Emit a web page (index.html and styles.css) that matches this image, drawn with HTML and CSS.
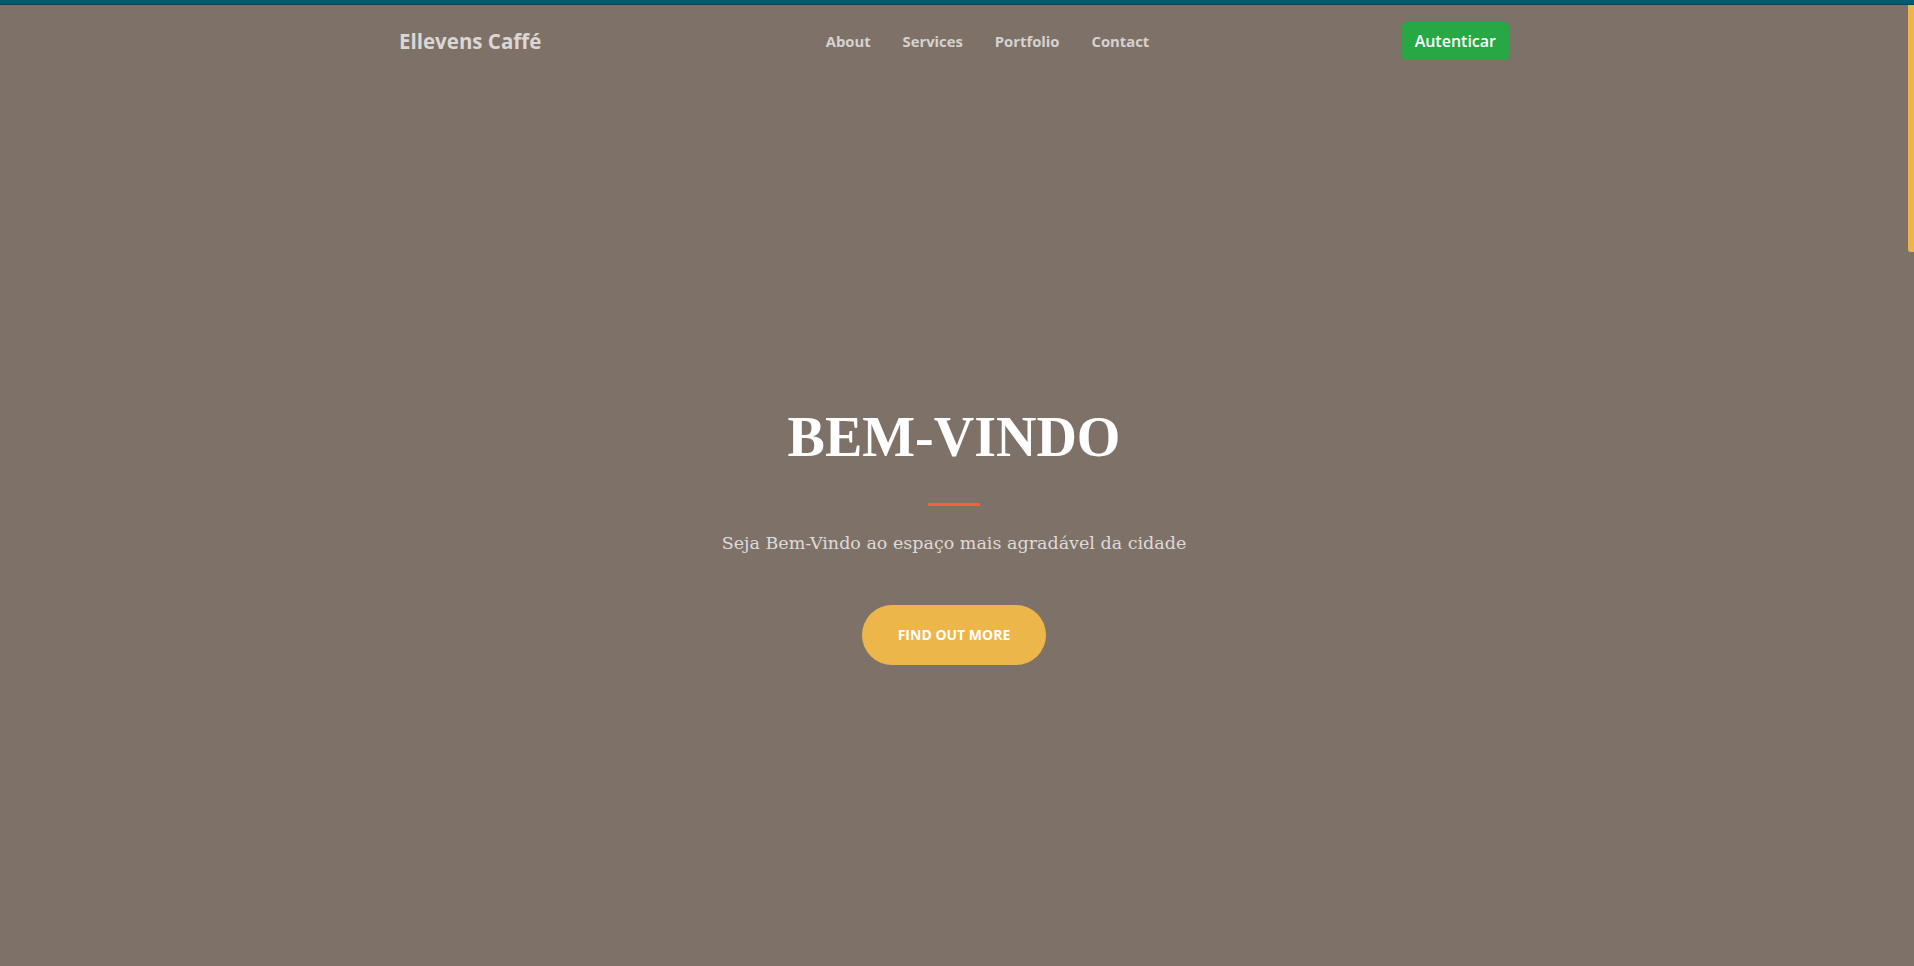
FILE: index.html
```html
<!DOCTYPE html>
<html lang="pt-BR">
<head>
<meta charset="utf-8">
<title>Ellevens Caffé</title>
<link rel="stylesheet" href="styles.css">
</head>
<body>
<div class="top-strip"></div>
<div class="window">
  <header class="masthead">
    <nav class="navbar">
      <div class="container nav-inner">
        <a class="brand" href="#page-top">Ellevens Caffé</a>
        <ul class="nav-links">
          <li><a href="#about">About</a></li>
          <li><a href="#services">Services</a></li>
          <li><a href="#portfolio">Portfolio</a></li>
          <li><a href="#contact">Contact</a></li>
        </ul>
        <a class="btn-auth" href="#login">Autenticar</a>
      </div>
    </nav>
    <div class="hero-body">
      <h1 class="hero-title">BEM-VINDO</h1>
      <hr class="divider">
      <p class="hero-text">Seja Bem-Vindo ao espaço mais agradável da cidade</p>
      <a class="btn-xl" href="#about">Find Out More</a>
    </div>
  </header>
  <div class="scrollbar"><div class="scroll-thumb"></div></div>
</div>
</body>
</html>
```
FILE: styles.css
```css
* { box-sizing: border-box; }

html, body {
  margin: 0;
  padding: 0;
  height: 100%;
  overflow: hidden;
  font-family: "Open Sans", "Liberation Sans", sans-serif;
}

.top-strip {
  height: 5px;
  background: #045a6e;
  border-bottom: 1px solid #0b4252;
}

.window {
  height: calc(100vh - 5px);
  display: flex;
  background: #7d7168;
}

.scrollbar {
  width: 6px;
  flex: none;
}

.scroll-thumb {
  height: 247px;
  background: #ecb64b;
  border-radius: 0 0 0 3px;
}

.masthead {
  flex: 1;
  min-width: 0;
  display: flex;
  flex-direction: column;
}

.container {
  max-width: 1140px;
  margin: 0 auto;
  padding: 0 15px;
  width: 100%;
}

.navbar { padding: 17px 0; }

.nav-inner {
  display: flex;
  align-items: center;
}

.brand {
  color: rgba(255, 255, 255, 0.72);
  font-weight: 700;
  font-size: 20.5px;
  text-decoration: none;
  margin-right: 32px;
  line-height: 1;
}

.nav-links {
  list-style: none;
  margin: 0 auto;
  padding: 0;
  display: flex;
}

.nav-links a {
  display: block;
  padding: 0 16px;
  color: rgba(255, 255, 255, 0.7);
  font-weight: 700;
  font-size: 14.8px;
  text-decoration: none;
}

.btn-auth {
  display: inline-block;
  background: #28a745;
  border: 1px solid #28a745;
  border-radius: 4px;
  color: #fff;
  font-size: 16px;
  font-weight: 600;
  line-height: 24px;
  padding: 6px 12px;
  text-decoration: none;
}

.hero-body {
  flex: 1;
  display: flex;
  flex-direction: column;
  align-items: center;
  justify-content: center;
  padding-top: 26px;
  text-align: center;
}

.hero-title {
  margin: 0;
  font-family: "Liberation Serif", "Times New Roman", serif;
  font-weight: 700;
  font-size: 56px;
  line-height: 1.2;
  color: #fff;
}

.divider {
  width: 52px;
  height: 3px;
  margin: 32px auto 0;
  border: 0;
  background: #f4623a;
}

.hero-text {
  margin: 24px 0 48px;
  font-family: "DejaVu Serif", "Liberation Serif", serif;
  font-size: 17.5px;
  line-height: 27px;
  color: rgba(255, 255, 255, 0.75);
}

.btn-xl {
  display: inline-block;
  background: #ecb64b;
  color: #fff;
  border-radius: 160px;
  padding: 20px 36px;
  font-size: 14px;
  line-height: 20px;
  font-weight: 700;
  text-transform: uppercase;
  text-decoration: none;
}
```
